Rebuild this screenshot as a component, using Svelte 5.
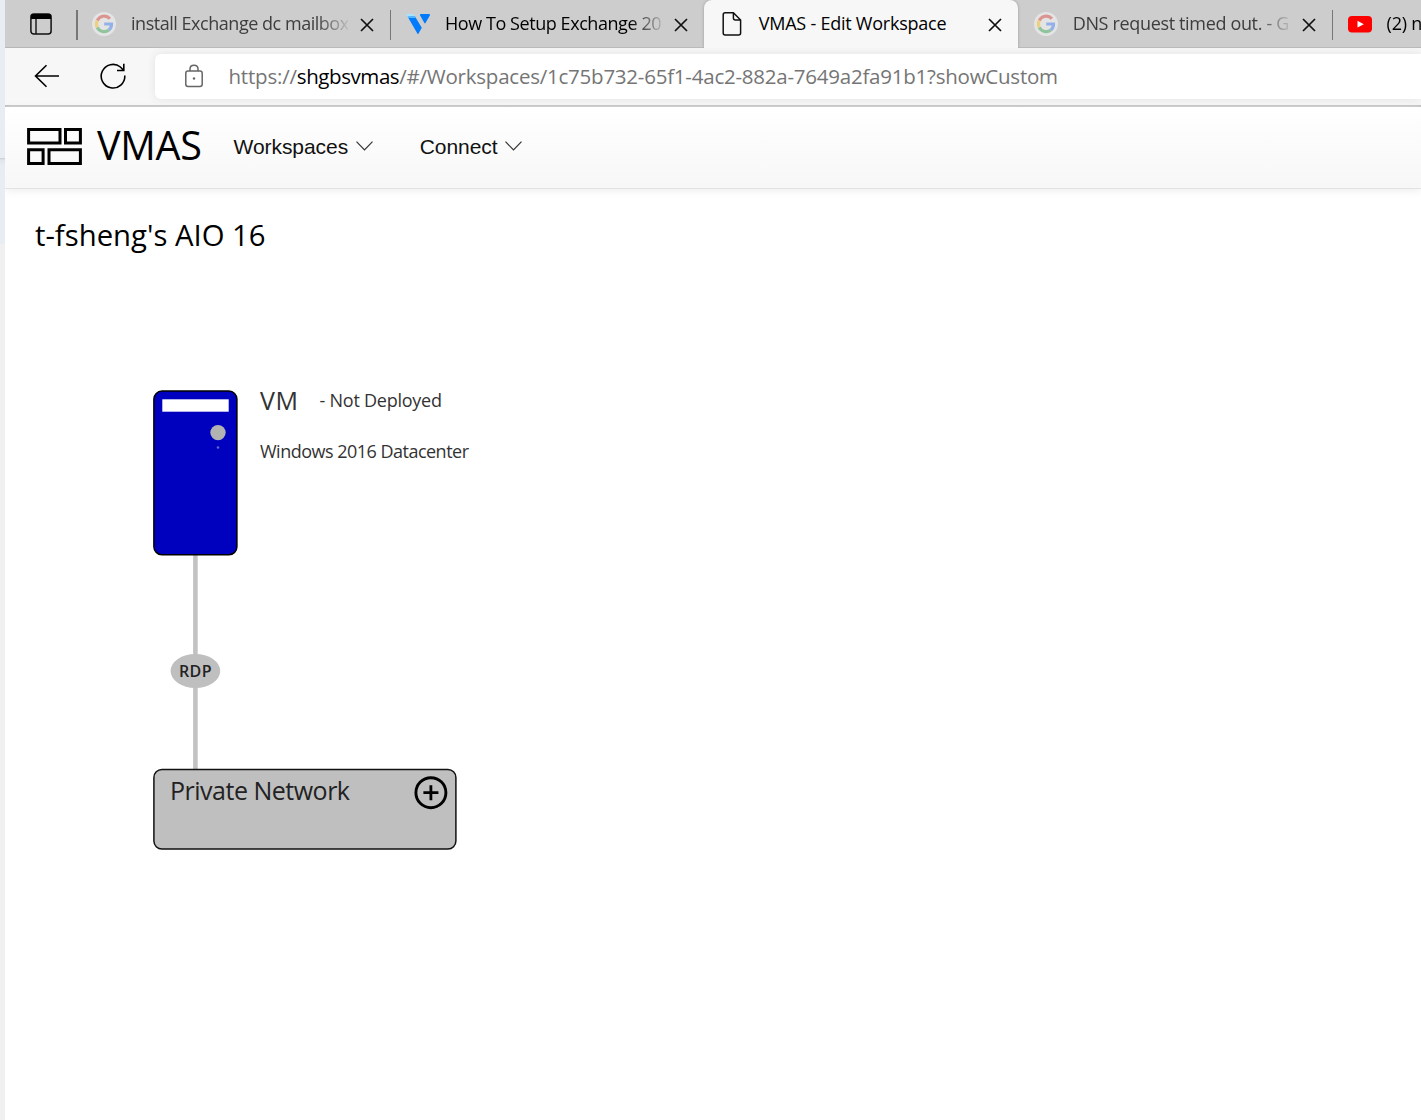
<script>
  // Browser tabs; tracking is the letter-spacing of the title in px.
  const tabs = [
    { icon: 'google', title: 'install Exchange dc mailbox', tracking: -0.47, sleeping: true },
    { icon: 'vultr', title: 'How To Setup Exchange 20', tracking: -0.43 },
    { icon: 'page', title: 'VMAS - Edit Workspace', tracking: -0.24, active: true },
    { icon: 'google', title: 'DNS request timed out. - G', tracking: -0.34, sleeping: true },
    { icon: 'youtube', title: '(2) n', tracking: -0.2 }
  ];
  const menus = ['Workspaces', 'Connect'];
</script>

{#snippet favicon(name)}
  <svg class="favicon" viewBox="0 0 24 24" aria-hidden="true">
    {#if name === 'google'}
      <circle cx="12" cy="12" r="12" fill="#e4e4e4" />
      <g fill="none" stroke-width="3.2">
        <path d="M17.9 6.7A7.6 7.6 0 0 0 5.3 8.6" stroke="#db9590" />
        <path d="M5.3 8.6A7.6 7.6 0 0 0 5.3 15.6" stroke="#ecd183" />
        <path d="M5.3 15.6A7.6 7.6 0 0 0 16.8 18" stroke="#90c49d" />
        <path d="M16.8 18A7.6 7.6 0 0 0 19.5 12H12.2" stroke="#93b1e8" />
      </g>
    {:else if name === 'vultr'}
      <path d="M0 2H7.5L10 6H2.4Z" fill="#a7e3ff" />
      <path d="M2 5.3L3.8 4.6H9L15.8 15.7L12.4 21.7Q12 22.4 11.5 21.7Z" fill="#007bfc" />
      <path d="M1.4 4.3H8.9L10 6H2.4Z" fill="#51b9ff" />
      <path d="M14 3.2Q13.6 2 15 2H23Q24.4 2.2 23.8 3.6L19.5 11Q19 11.8 18.4 11Z" fill="#007bfc" />
    {:else if name === 'page'}
      <path d="M5.2 .8H13.4L20.6 8V21Q20.6 23 18.6 23H5.2Q3.2 23 3.2 21V2.8Q3.2 .8 5.2 .8ZM13.4 .8V6Q13.4 8 15.4 8H20.6" fill="none" stroke="#111" stroke-width="1.5" />
    {:else}
      <rect x="0" y="4" width="24" height="16.5" rx="4" fill="#f00" />
      <path d="M9.5 8.8V15.6L15.8 12.2Z" fill="#fff" />
    {/if}
  </svg>
{/snippet}

<div class="desktop">
  <div class="behind"><div class="behind-top"></div><div class="behind-mid"></div></div>
  <div class="browser">
    <div class="tabstrip">
      <div class="tab-actions">
        <svg width="22" height="22" viewBox="0 0 22 22" aria-hidden="true">
          <rect x=".9" y="1" width="20.2" height="20" rx="3" fill="none" stroke="#111" stroke-width="1.5" />
          <path d="M1 6V3.5Q1 1 3.5 1H18.5Q21 1 21 3.5V6Z" fill="#000" />
          <path d="M6 6V21" stroke="#111" stroke-width="1.4" />
        </svg>
      </div>
      {#each tabs as tab, i}
        <div class="tab" class:active={tab.active} class:sleeping={tab.sleeping} class:divided={i !== 2 && i !== 3}>
          {@render favicon(tab.icon)}
          <span class="title" class:faded={!tab.active} style="letter-spacing: {tab.tracking}px">{tab.title}</span>
          <svg class="close" viewBox="0 0 14 14" aria-hidden="true"><path d="M1 1L13 13M13 1L1 13" /></svg>
        </div>
      {/each}
    </div>

    <div class="toolbar">
      <svg class="back" viewBox="0 0 26 24" aria-hidden="true"><path d="M25 12H1.5M12.5 1.3L1.5 12L12.5 22.7" /></svg>
      <svg class="reload" viewBox="0 0 26 26" aria-hidden="true"><path d="M24.8 12.5A11.8 11.8 0 1 1 20.4 4L23.6 7.3M23.8 .8V7.5H17" /></svg>
      <div class="address">
        <svg class="lock" viewBox="0 0 18 24" aria-hidden="true">
          <rect x=".8" y="7" width="16.4" height="15.4" rx="2.2" />
          <path d="M5 7V5Q5 1.2 9 1.2T13 5V7" />
          <circle cx="9" cy="14.5" r="1.2" />
        </svg>
        <span class="url"><span class="scheme">https://</span><span class="host">shgbsvmas</span><span class="path">/#/Workspaces/1c75b732-65f1-4ac2-882a-7649a2fa91b1?showCustom</span></span>
      </div>
    </div>

    <header>
      <svg class="logo" viewBox="0 0 55 38" aria-hidden="true">
        <path d="M1.6 1.6H33V15H1.6ZM38.5 1.6H53.4V15H38.5ZM1.6 21.7H16.1V35.6H1.6ZM22 21.7H53.4V35.6H22Z" />
      </svg>
      <span class="brand">VMAS</span>
      <nav>
        {#each menus as menu}
          <span class="menu">{menu}
            <svg viewBox="0 0 17 10" aria-hidden="true"><path d="M.5 .7L8.5 8.9L16.5 .7" /></svg>
          </span>
        {/each}
      </nav>
    </header>

    <main>
      <h1>t-fsheng's AIO 16</h1>
      <svg class="diagram" viewBox="140 380 360 480">
        <path d="M195.4 555V769" stroke="#c2c2c2" stroke-width="4.6" />
        <rect x="153.9" y="391.1" width="83" height="163.6" rx="8" fill="#0000bf" stroke="#000" stroke-width="1.5" />
        <rect x="162.3" y="399.3" width="66.4" height="12.4" fill="#fff" />
        <circle cx="218" cy="432.6" r="7.7" fill="#b2b2b2" />
        <circle cx="218" cy="447.5" r="1.3" fill="#6868c8" />
        <text class="name" x="260" y="410" textLength="38">VM</text>
        <text class="label" x="319.5" y="407.3" textLength="122.5">- Not Deployed</text>
        <text class="label" x="260" y="458.3" textLength="209">Windows 2016 Datacenter</text>
        <ellipse cx="195.4" cy="671" rx="24.8" ry="17" fill="#bfbfbf" />
        <text class="protocol" x="179" y="677" textLength="32.5">RDP</text>
        <rect x="153.9" y="769.4" width="302" height="79.6" rx="8" fill="#bfbfbf" stroke="#111" stroke-width="1.5" />
        <text class="network" x="170" y="800" textLength="180">Private Network</text>
        <circle cx="430.9" cy="792.7" r="15" fill="none" stroke="#000" stroke-width="2.9" />
        <path d="M423.4 792.7H438.4M430.9 785.2V800.2" stroke="#000" stroke-width="2.8" />
      </svg>
    </main>
  </div>
</div>

<style>
  :global(body) { margin: 0; background: #fff; overflow: hidden; }
  .desktop { display: flex; width: 100%; height: 1120px; overflow: hidden; font-family: 'Open Sans', 'Noto Sans', sans-serif; font-weight: 370; color: #000; }
  .behind { flex: 0 0 5px; background: #f0f0f0; }
  .behind-top { height: 158px; background: #e7edf3; }
  .behind-mid { height: 86px; background: linear-gradient(#c8ced3 0, #dfe5ea 2px, #e7edf2 8px); }
  .browser { flex: 1; min-width: 0; display: flex; flex-direction: column; overflow: hidden; }

  .tabstrip { flex: 0 0 48px; display: flex; background: #cdcdcd; box-shadow: inset 0 -1px #b7b7b7; }
  .tab-actions { flex: 0 0 71px; box-sizing: border-box; padding: 13px 0 0 25px; }
  .tab { flex: 0 0 313.9px; box-sizing: border-box; height: 48px; padding-left: 16px; display: flex; align-items: center; position: relative; }
  .divided::before { content: ''; position: absolute; left: 0; top: 10px; width: 1.5px; height: 30px; background: #777; }
  .active { background: #f7f7f7; border-radius: 8px 8px 0 0; box-shadow: 0 0 3px #999; clip-path: inset(0 -4px 0 -4px); }
  .favicon { width: 24px; height: 24px; flex: none; }
  .title { width: 217px; margin: 0 0 2px 15px; line-height: 46px; font-size: 18px; white-space: nowrap; }
  .sleeping .title { color: #3d3d3d; }
  .faded { mask-image: linear-gradient(90deg, #000 185px, transparent 221px); }
  .close { width: 14px; height: 14px; margin-left: 12px; flex: none; position: relative; top: 1px; fill: none; stroke: #111; stroke-width: 1.7; }

  .toolbar { flex: 0 0 57px; display: flex; align-items: center; background: #f7f7f7; border-bottom: 2px solid #bdbdbd; }
  .toolbar svg { fill: none; flex: none; margin-bottom: 1.5px; }
  .back { width: 26px; height: 24px; margin-left: 29px; stroke: #000; stroke-width: 1.6; }
  .reload { width: 26px; height: 26px; margin-left: 40px; stroke: #000; stroke-width: 1.6; }
  .address { flex: 1; height: 45px; margin-left: 29px; display: flex; align-items: center; background: #fff; border-radius: 6px 0 0 6px; box-shadow: 0 0 8px #e2e2e2; }
  .lock { width: 18px; height: 24px; margin-left: 30px; stroke: #666; stroke-width: 1.5; }
  .lock circle { fill: #666; stroke: none; }
  .url { margin: 0 0 2px 25.5px; font-size: 20.5px; line-height: 42px; white-space: nowrap; color: #757575; }
  .scheme { letter-spacing: -0.2px; }
  .host { color: #000; letter-spacing: -0.42px; }
  .path { letter-spacing: -0.23px; }

  header { flex: 0 0 81px; display: flex; align-items: center; background: linear-gradient(#fff, #f7f7f7); border-bottom: 1px solid #e3e3e3; box-shadow: 0 2px 8px #eee; }
  .logo { width: 55px; height: 38px; margin: 0 0 1px 22px; fill: none; stroke: #000; stroke-width: 3; }
  .brand { margin-left: 15px; width: 104px; padding-bottom: 5px; font-size: 39.5px; letter-spacing: -0.25px; font-weight: 400; line-height: 70px; }
  nav { display: flex; gap: 47px; margin: 0 0 2px 32.5px; }
  .menu { display: flex; align-items: center; gap: 7.5px; font: 21px/30px 'Liberation Sans', Arial, sans-serif; letter-spacing: -0.05px; color: #111; }
  .menu svg { width: 17px; height: 10px; margin-bottom: 2px; fill: none; stroke: #333; stroke-width: 1.2; }

  main { flex: 1; }
  h1 { margin: 0; padding: 26px 0 0 30px; font-size: 29.3px; line-height: 40px; font-weight: 400; }
  .diagram { display: block; width: 360px; height: 480px; margin: 125px 0 0 135px; }
  text { fill: #333; font-weight: 380; }
  .name { font-size: 25px; }
  .label { font-size: 18px; }
  .protocol { font-size: 16px; font-weight: 600; fill: #222; }
  .network { font-size: 25px; fill: #222; }
</style>
